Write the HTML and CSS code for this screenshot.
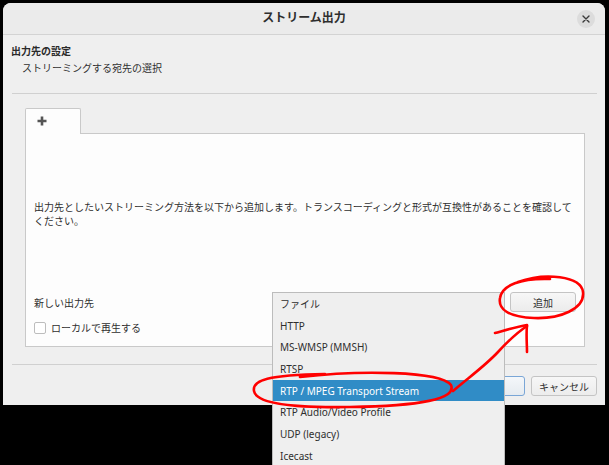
FILE: index.html
```html
<!DOCTYPE html>
<html lang="ja">
<head>
<meta charset="utf-8">
<title>ストリーム出力</title>
<link rel="stylesheet" href="styles.css">
</head>
<body>
<div class="dialog">
  <div class="titlebar">
    <span></span>
    <span class="title">ストリーム出力</span>
    <span class="close-wrap">
      <span class="close">
        <svg width="8" height="8" viewBox="0 0 8 8"><path d="M1 1 L7 7 M7 1 L1 7" stroke="#3a3a3a" stroke-width="1.4" stroke-linecap="round"/></svg>
      </span>
    </span>
  </div>
  <div class="content">
    <div class="h1">出力先の設定</div>
    <div class="h2">ストリーミングする宛先の選択</div>
    <div class="sep"></div>
    <div class="tabs">
      <div class="tab">
        <svg width="10" height="10" viewBox="0 0 10 10"><path d="M5 0.5 V9.5 M0.5 5 H9.5" stroke="#555" stroke-width="2.6"/></svg>
      </div>
    </div>
    <div class="panel">
      <p class="desc">出力先としたいストリーミング方法を以下から追加します。トランスコーディングと形式が互換性があることを確認してください。</p>
      <div class="row">
        <span>新しい出力先</span>
        <span class="btn add">追加</span>
      </div>
      <label class="check-row"><span class="checkbox"></span><span>ローカルで再生する</span></label>
    </div>
    <div class="sep bottom"></div>
    <div class="buttons">
      <span class="btn ok">OK</span>
      <span class="btn cancel">キャンセル</span>
    </div>
  </div>
</div>

<ul class="menu">
  <li>ファイル</li>
  <li>HTTP</li>
  <li>MS-WMSP (MMSH)</li>
  <li>RTSP</li>
  <li class="sel">RTP / MPEG Transport Stream</li>
  <li>RTP Audio/Video Profile</li>
  <li>UDP (legacy)</li>
  <li>Icecast</li>
</ul>

<svg class="annot" width="609" height="465" viewBox="0 0 609 465">
  <g fill="none" stroke="#ff0000" stroke-width="2.6" stroke-linecap="round" stroke-linejoin="round">
    <path d="M518 282 C545 272, 581 276, 583 292 C585 309, 560 319, 534 318 C508 317, 498 309, 500 298 C502 285, 521 278, 550 279"/>
    <path d="M300 377 C360 370, 440 371, 451 385 C457 399, 420 406, 350 407 C290 408, 256 403, 254 391 C252 380, 268 375, 325 374"/>
    <path d="M453 391 C468 378, 485 366, 498 352 C510 339, 518 332, 527 326"/>
    <path d="M495 333 C506 330, 516 327, 527 325 C526 335, 527 344, 527 352"/>
  </g>
</svg>
</body>
</html>
```

FILE: styles.css
```css
* { box-sizing: border-box; }
html, body { margin: 0; padding: 0; }
body {
  background: #000;
  width: 609px;
  height: 465px;
  overflow: hidden;
  position: relative;
  font-family: "Noto Sans", "Noto Sans CJK JP", sans-serif;
  font-size: 10px;
  color: #2f2f2f;
}
.dialog {
  margin: 3px 0 0 3px;
  width: 602px;
  height: 402px;
  background: #efefef;
  border-radius: 8px 8px 0 0;
  display: flex;
  flex-direction: column;
}
.titlebar {
  height: 32px;
  background: #ebebeb;
  border-bottom: 1px solid #d3d3d3;
  border-radius: 8px 8px 0 0;
  display: grid;
  grid-template-columns: 1fr auto 1fr;
  align-items: center;
}
.title {
  font-size: 12px;
  font-weight: bold;
  color: #2e2e2e;
  line-height: 16px;
  padding-bottom: 1px;
}
.close-wrap { display: flex; justify-content: flex-end; padding-right: 10px; }
.close {
  width: 18px;
  height: 18px;
  border-radius: 50%;
  background: #dcdcdc;
  display: flex;
  align-items: center;
  justify-content: center;
}
.content {
  padding: 0 8px 0 9px;
  display: flex;
  flex-direction: column;
}
.h1 {
  margin-top: 9px;
  margin-left: -1px;
  line-height: 14px;
  font-weight: bold;
  color: #2a2a2a;
}
.h2 {
  margin-top: 3px;
  margin-left: 10px;
  line-height: 14px;
}
.sep {
  margin-top: 18px;
  height: 1px;
  background: #d0d0d0;
}
.tabs {
  margin-top: 14px;
  margin-left: 13px;
  display: flex;
  position: relative;
  z-index: 1;
}
.tab {
  width: 56px;
  height: 26px;
  background: #fdfdfd;
  border: 1px solid #c9c9c9;
  border-bottom: none;
  border-radius: 2px 2px 0 0;
  padding: 7px 0 0 11px;
  margin-bottom: -1px;
}
.tab svg { display: block; }
.panel {
  margin-left: 13px;
  width: 560px;
  height: 214px;
  background: #fdfdfd;
  border: 1px solid #c9c9c9;
  padding: 66px 8px 0 8px;
  display: flex;
  flex-direction: column;
}
.desc {
  margin: 0;
  line-height: 14px;
}
.row {
  margin-top: 64px;
  display: flex;
  justify-content: space-between;
  align-items: center;
}
.check-row {
  margin-top: 9px;
  display: flex;
  align-items: center;
  gap: 5px;
  line-height: 14px;
}
.checkbox {
  width: 12px;
  height: 12px;
  border: 1px solid #bdbdbd;
  border-radius: 2px;
  background: #fff;
}
.btn {
  height: 20px;
  width: 66px;
  border: 1px solid #c4c4c4;
  border-radius: 3px;
  background: linear-gradient(#f7f7f7, #ececec);
  display: flex;
  align-items: center;
  justify-content: center;
  color: #2e2e2e;
}
.sep.bottom { margin-top: 17px; }
.buttons {
  margin-top: 11px;
  display: flex;
  justify-content: flex-end;
  gap: 6px;
}
.btn.ok {
  border-color: #7aa6d6;
  background: linear-gradient(#f4f7fa, #e6ebf0);
}
.menu {
  position: absolute;
  left: 272px;
  top: 292px;
  width: 233px;
  height: 190px;
  margin: 0;
  padding: 0;
  list-style: none;
  background: #efefef;
  border: 1px solid #bcbcbc;
  z-index: 5;
}
.menu li {
  height: 21.7px;
  line-height: 22.5px;
  padding-left: 7px;
  color: #2e2e2e;
  white-space: nowrap;
}
.menu li.sel {
  background: #308cc6;
  color: #fff;
}
.annot {
  position: absolute;
  left: 0;
  top: 0;
  z-index: 10;
  pointer-events: none;
}
```
